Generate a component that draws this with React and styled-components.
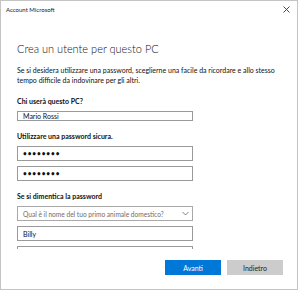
import styled, { createGlobalStyle } from 'styled-components';

const GlobalStyle = createGlobalStyle`
html, body {
    margin: 0;
    padding: 0;
    background: #ffffff;
}
body {
    font-family: Lato, "Open Sans", sans-serif;
    color: #000000;
}`

const Chevron = () => (
    <svg width="7" height="5" viewBox="0 0 7 5">
        <path d="M0.5 1 L3.5 4 L6.5 1" fill="none" stroke="#666" strokeWidth="0.8" />
    </svg>
)

const CloseIcon = () => (
    <svg width="7" height="7" viewBox="0 0 7 7">
        <path d="M0.5 0.5 L6.5 6.5 M6.5 0.5 L0.5 6.5" fill="none" stroke="#333" strokeWidth="0.9" />
    </svg>
)

const App = () => {
    return (
        <>
            <GlobalStyle />
            <Window>
                <TitleBar>
                    <WindowTitle>Account Microsoft</WindowTitle>
                    <CloseButton><CloseIcon /></CloseButton>
                </TitleBar>
                <ScrollArea>
                    <Heading>Crea un utente per questo PC</Heading>
                    <Intro>
                        Se si desidera utilizzare una password, sceglierne una facile da ricordare e allo stesso<br />
                        tempo difficile da indovinare per gli altri.
                    </Intro>
                    <Label first>Chi userà questo PC?</Label>
                    <Field>Mario Rossi</Field>
                    <Label>Utilizzare una password sicura.</Label>
                    <Fields>
                        <Field password>••••••••</Field>
                        <Field password>••••••••</Field>
                    </Fields>
                    <Label>Se si dimentica la password</Label>
                    <Fields>
                        <Select>
                            <Placeholder>Qual è il nome del tuo primo animale domestico?</Placeholder>
                            <Chevron />
                        </Select>
                        <Field>Billy</Field>
                        <Field />
                    </Fields>
                </ScrollArea>
                <Footer>
                    <Button primary>Avanti</Button>
                    <Button>Indietro</Button>
                </Footer>
            </Window>
        </>
    )
}

const Window = styled.div`
display: flex;
flex-direction: column;
width: 298px;
height: 290px;
box-sizing: border-box;
border: 1px solid #c4c4c4;
background: #ffffff;`

const TitleBar = styled.div`
display: flex;
align-items: center;
justify-content: space-between;
height: 17px;
padding: 0 6px 1px 5px;
flex-shrink: 0;`

const WindowTitle = styled.div`
font-size: 6px;
color: #222;`

const CloseButton = styled.div`
display: flex;
margin-right: 1px;`

const ScrollArea = styled.div`
display: flex;
flex-direction: column;
align-items: flex-start;
height: 230px;
overflow: hidden;
padding-left: 16px;
flex-shrink: 0;`

const Heading = styled.h1`
margin: 20px 0 0 0;
font-size: 11px;
line-height: 19px;
font-weight: 300;
color: #111;
white-space: nowrap;`

const Intro = styled.p`
margin: 8px 0 0 0;
font-size: 7px;
line-height: 9.5px;
color: #111;
white-space: nowrap;`

const Label = styled.div`
margin-top: ${props => props.first ? '11px' : '10px'};
margin-bottom: 5px;
font-size: 7px;
line-height: 10px;
font-weight: 700;
color: #111;`

const Fields = styled.div`
display: flex;
flex-direction: column;
gap: 5px;`

const Field = styled.div`
display: flex;
align-items: center;
width: 176px;
height: 15px;
box-sizing: border-box;
border: 1px solid #9a9a9a;
padding-left: 5px;
font-size: ${props => props.password ? '6.5px' : '7px'};
font-weight: ${props => props.password ? 700 : 400};
letter-spacing: ${props => props.password ? '0.9px' : '0'};
color: #111;`

const Select = styled(Field)`
justify-content: space-between;
padding-right: 3px;
border-color: #a8a8a8;`

const Placeholder = styled.span`
color: #6d6d6d;
font-size: 6.6px;
font-weight: 400;
letter-spacing: 0;
white-space: nowrap;`

const Footer = styled.div`
display: flex;
justify-content: flex-end;
gap: 6px;
padding: 11px 14px 0 0;`

const Button = styled.div`
display: flex;
align-items: center;
justify-content: center;
width: 56px;
height: 15px;
font-size: 7px;
background: ${props => props.primary ? '#0078d7' : '#cccccc'};
color: ${props => props.primary ? '#ffffff' : '#222'};`

export default App
